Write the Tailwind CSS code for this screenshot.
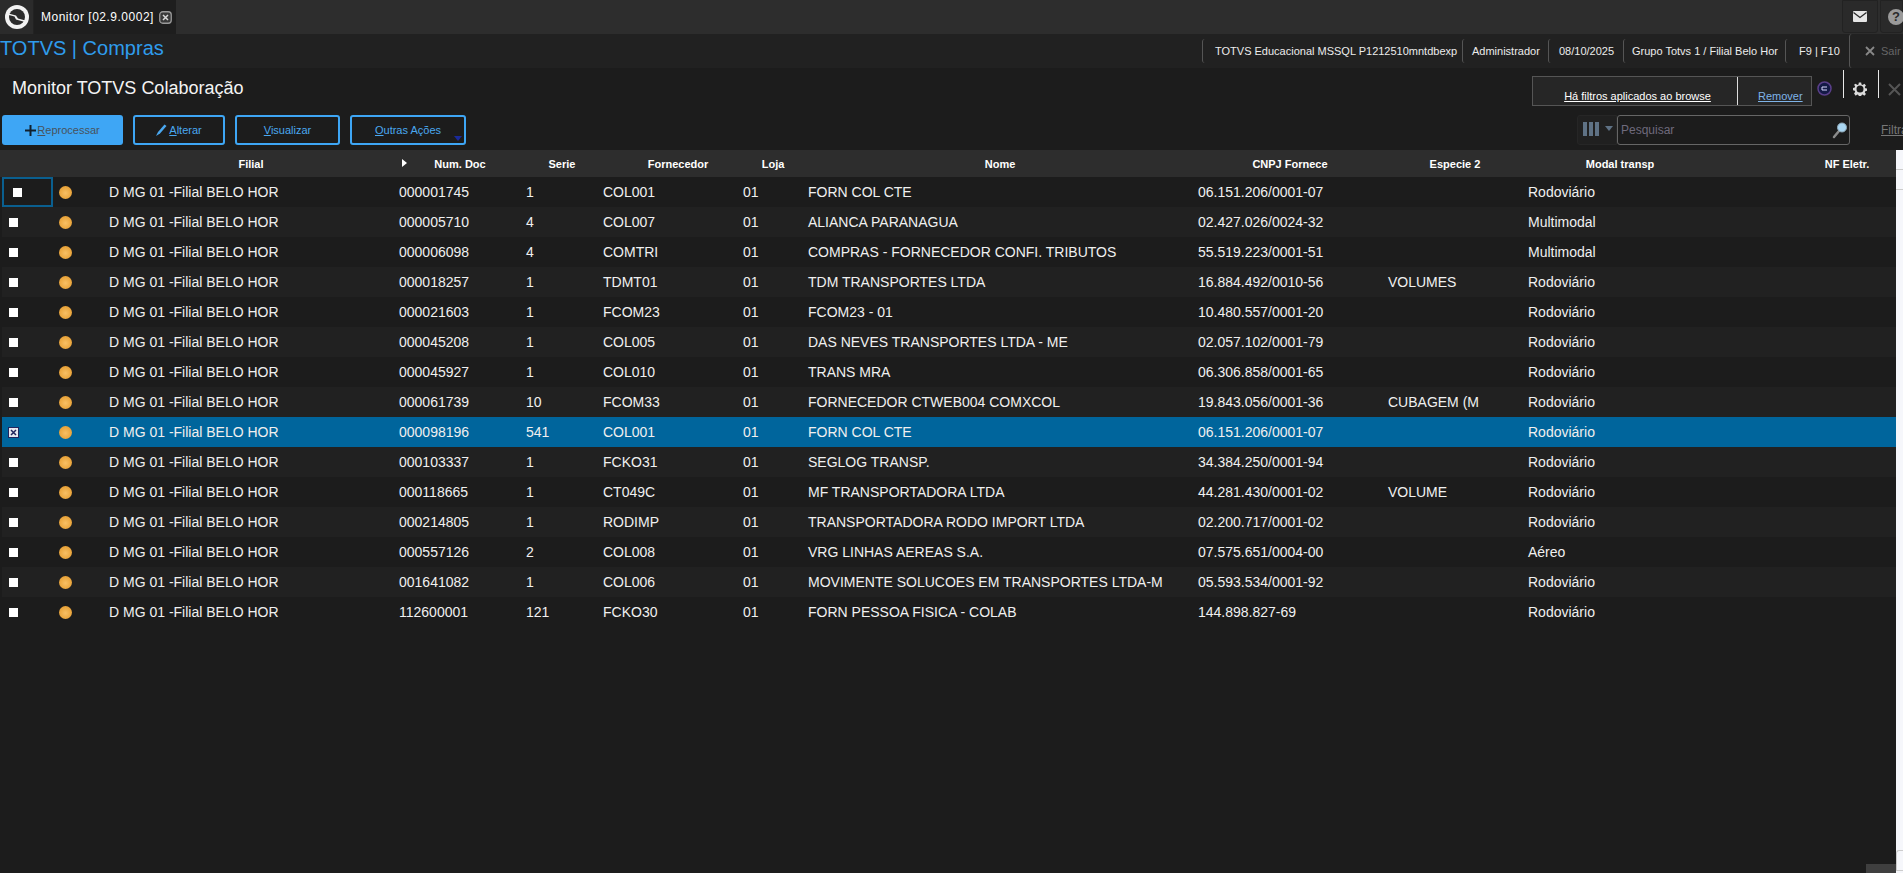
<!DOCTYPE html>
<html lang="pt-BR">
<head>
  <meta charset="UTF-8">
  <title>Monitor TOTVS Colaboração</title>
  <script src="https://cdn.jsdelivr.net/npm/@tailwindcss/browser@4"></script>
</head>
<body class="h-screen w-full overflow-hidden bg-[#1c1c1c] font-['Liberation_Sans',Arial,sans-serif] text-[14px] text-[#f0f0f0] flex flex-col relative">

  <!-- tab bar -->
  <div class="h-[34px] shrink-0 bg-[#2d2d2d] flex">
    <div class="w-[34px] flex items-center justify-center bg-[#2b2b2b] border-r border-[#222]">
      <svg width="26" height="26" viewBox="0 0 26 26">
        <circle cx="13" cy="13" r="12" fill="#f2f2f2"/>
        <circle cx="13" cy="13" r="8" fill="#2b2b2b"/>
        <path d="M4.500 9.500 L12 11.500 L14 14.500 L21.500 16.500 L21 18 L12 15.500 L10.500 12.500 L5 11 Z" fill="#f2f2f2"/>
        <path d="M6 10 L13 12 L15 15 L20 16.500 L20 20 L6 20 Z" fill="#2b2b2b" opacity="0"/>
      </svg>
    </div>
    <div class="w-[142px] bg-[#1e1e1e] flex items-center pl-[7px] gap-[5px]">
      <span class="text-[12px] tracking-[0.5px] text-white whitespace-nowrap">Monitor [02.9.0002]</span>
      <svg width="13" height="13" viewBox="0 0 13 13"><rect x="0.75" y="0.75" width="11.5" height="11.5" rx="3" fill="#3a3a3a" stroke="#9a9a9a" stroke-width="1.3"/><path d="M4 4 L9 9 M9 4 L4 9" stroke="#d8d8d8" stroke-width="1.5"/></svg>
    </div>
    <div class="ml-auto flex gap-[2px]">
      <div class="w-[36px] h-[33px] bg-[#2a2a2a] border border-[#222] rounded-b-[3px] flex items-center justify-center">
        <svg width="14" height="11" viewBox="0 0 14 11"><rect width="14" height="11" rx="1" fill="#e6e6e6"/><path d="M0.5 1.5 L7 6.5 L13.5 1.5" fill="none" stroke="#2a2a2a" stroke-width="1.3"/></svg>
      </div>
      <div class="w-[23px] h-[33px] bg-[#2a2a2a] border border-[#222] rounded-b-[3px] flex items-center pl-[7px]">
        <span class="w-[16px] h-[16px] shrink-0 rounded-full bg-[#9a9a9a] text-[#2a2a2a] text-[13px] font-bold leading-[16px] text-center">?</span>
      </div>
    </div>
  </div>

  <!-- app header -->
  <div class="h-[34px] shrink-0 bg-[#212121] flex items-center">
    <span class="text-[20px] text-[#2f9cec] whitespace-nowrap mb-[6px]">TOTVS | Compras</span>
    <div class="ml-auto flex items-center text-[11px] text-[#ececec] whitespace-nowrap w-[701px] shrink-0">
      <span class="h-[24px] leading-[24px] border-l border-[#555] rounded-l-[3px] w-[260px] pl-[12px]">TOTVS Educacional MSSQL P1212510mntdbexp</span>
      <span class="h-[24px] leading-[24px] border-l border-[#555] rounded-l-[3px] w-[86px] pl-[9px]">Administrador</span>
      <span class="h-[24px] leading-[24px] border-l border-[#555] rounded-l-[3px] w-[75px] pl-[10px]">08/10/2025</span>
      <span class="h-[24px] leading-[24px] border-l border-[#555] rounded-l-[3px] w-[162px] pl-[8px]">Grupo Totvs 1 / Filial Belo Hor</span>
      <span class="h-[24px] leading-[24px] border-l border-[#555] rounded-l-[3px] w-[64px] pl-[13px]">F9 | F10</span>
      <span class="h-[34px] leading-[34px] border-l border-[#555] rounded-l-[3px] pl-[15px] text-[#666] flex items-center gap-[6px]">
        <svg width="10" height="10" viewBox="0 0 10 10"><path d="M1 1 L9 9 M9 1 L1 9" stroke="#888" stroke-width="1.8"/></svg>Sair
      </span>
    </div>
  </div>

  <!-- title row -->
  <div class="h-[47px] shrink-0 flex">
    <h1 class="pl-[12px] pt-[8px] text-[18px] leading-[24px] text-[#f4f4f4] whitespace-nowrap">Monitor TOTVS Colaboração</h1>
    <div class="ml-auto w-[371px] shrink-0 flex items-start">
      <div class="mt-[8px] w-[280px] h-[30px] bg-[#262626] border border-[#555] flex text-[11px] shrink-0">
        <a class="w-[205px] h-full border-r border-[#ddd] text-white underline text-center leading-[14px] pt-[12px] pl-[5px] whitespace-nowrap">Há filtros aplicados ao browse</a>
        <a class="pl-[20px] pt-[12px] leading-[14px] text-[#7fb4e8] underline">Remover</a>
      </div>
      <svg class="mt-[13px] ml-[5px] shrink-0" width="15" height="15" viewBox="0 0 15 15"><circle cx="7.5" cy="7.5" r="6.5" fill="#141a46" stroke="#5a3f8a" stroke-width="1.5"/><path d="M5 6 H10 M5 9 H10 M5 6 V9" stroke="#d8d8ff" stroke-width="1" fill="none"/></svg>
      <div class="mt-[2px] ml-[11px] w-[36px] h-[28px] border-x border-[#e8e8e8] flex items-center justify-center pt-[10px] pr-[2px] shrink-0">
        <svg width="14" height="14" viewBox="0 0 24 24"><path fill="#dcdcdc" fill-rule="evenodd" d="M10 1h4l.6 3.2 2 .8L19.4 3l2.8 2.8-2 2.8.8 2 3 .6v4l-3 .6-.8 2 2 2.8-2.800 2.800-2.800-2-2 .8-.6 3h-4l-.6-3-2-.8-2.800 2L1.800 19.600l2-2.800-.8-2-3-.6v-4l3-.6.8-2-2-2.800L4.600 3l2.800 2 2-.8zM12 6a6 6 0 1 0 0 12 6 6 0 0 0 0-12z"/></svg>
      </div>
      <svg class="mt-[15px] ml-[9px] shrink-0" width="13" height="13" viewBox="0 0 13 13"><path d="M1 1 L12 12 M12 1 L1 12" stroke="#555" stroke-width="2"/></svg>
    </div>
  </div>

  <!-- toolbar -->
  <div class="h-[30px] shrink-0 flex items-stretch text-[11px] mb-[5px] pl-[2px]">
    <button class="w-[121px] bg-[#3ea6f5] rounded-[3px] flex items-center justify-center gap-[1px] text-[#48525c]">
      <svg width="11" height="11" viewBox="0 0 11 11"><path d="M5.500 0 V11 M0 5.500 H11" stroke="#10202e" stroke-width="2"/></svg>
      <span><u>R</u>eprocessar</span>
    </button>
    <button class="ml-[10px] w-[92px] border-2 border-[#3ea6f5] rounded-[3px] flex items-center justify-center gap-[2px] text-[#4aa8f0]">
      <svg width="11" height="12" viewBox="0 0 11 12"><path d="M0 12 L2 8 L8.500 0.500 L10.500 2 L4 9.500 Z" fill="#4aa8f0"/></svg>
      <span><u>A</u>lterar</span>
    </button>
    <button class="ml-[10px] w-[105px] border-2 border-[#3ea6f5] rounded-[3px] text-[#4aa8f0]"><u>V</u>isualizar</button>
    <button class="ml-[10px] w-[116px] border-2 border-[#3ea6f5] rounded-[3px] text-[#4aa8f0] relative"><u>O</u>utras Ações
      <span class="absolute right-[2px] bottom-[2px] border-x-[4px] border-t-[5px] border-x-transparent border-t-[#1a2a9a]"></span>
    </button>
    <div class="ml-auto w-[326px] shrink-0 flex items-stretch">
      <div class="w-[40px] bg-[#202020] border border-[#262626] rounded-l-[3px] flex items-center pl-[5px] gap-[6px] pb-[3px] shrink-0">
        <span class="flex gap-[2px] h-[14px]">
          <span class="w-[4px] bg-[#5f7285]"></span><span class="w-[4px] bg-[#5f7285]"></span><span class="w-[4px] bg-[#5f7285]"></span>
        </span>
        <span class="border-x-[4px] border-t-[5px] border-x-transparent border-t-[#5f7285]"></span>
      </div>
      <div class="w-[233px] border border-[#666] rounded-[3px] flex items-center pl-[3px] pr-[1px] justify-between text-[12px] shrink-0">
        <span class="text-[#6f6a7c]">Pesquisar</span>
        <svg width="16" height="18" viewBox="0 0 16 18"><path d="M2 16 L7 10" stroke="#8a8a8a" stroke-width="2.500" stroke-linecap="round"/><circle cx="10" cy="6.500" r="4.500" fill="#a9d6f2" stroke="#8fa9b8" stroke-width="1"/></svg>
      </div>
      <a class="ml-[31px] self-center text-[12px] text-[#777] underline whitespace-nowrap">Filtrar</a>
    </div>
  </div>

  <!-- browse -->
  <div class="flex-1 min-h-0 flex">
    <div class="w-[1896px] shrink-0 flex flex-col">
      <div class="h-[27px] bg-[#2d2d2d] flex items-center pt-[1px] text-[11px] font-bold text-white text-center shrink-0">
        <div class="w-[100px]"></div>
        <div class="w-[302px] relative">Filial<span class="absolute right-[-5px] top-[3px] border-y-[4px] border-l-[5px] border-y-transparent border-l-white"></span></div>
        <div class="w-[116px]">Num. Doc</div>
        <div class="w-[88px]">Serie</div>
        <div class="w-[144px]">Fornecedor</div>
        <div class="w-[46px]">Loja</div>
        <div class="w-[408px]">Nome</div>
        <div class="w-[172px]">CNPJ Fornece</div>
        <div class="w-[158px]">Especie 2</div>
        <div class="w-[172px]">Modal transp</div>
        <div class="w-[94px] ml-[94px]">NF Eletr.</div>
      </div>

      <div class="ml-[2px] h-[30px] grid grid-cols-[51px_46px_290px_127px_77px_140px_65px_390px_190px_140px_1fr] items-center bg-[#1c1c1c] [&>div]:pl-[10px] [&>div]:whitespace-nowrap">
        <div class="h-full !pl-[9px] border-2 border-[#0a5f8f] flex items-center"><span class="block w-[9px] h-[9px] bg-white"></span></div>
        <div class="!pl-[6px]"><span class="block w-[13px] h-[13px] rounded-full bg-[radial-gradient(circle_at_50%_55%,#f8c064,#e8a238_70%,#b08a50)]"></span></div>
        <div>D MG 01 -Filial BELO HOR</div><div>000001745</div><div>1</div><div>COL001</div><div>01</div><div>FORN COL CTE</div><div>06.151.206/0001-07</div><div></div><div>Rodoviário</div>
      </div>
      <div class="ml-[2px] h-[30px] grid grid-cols-[51px_46px_290px_127px_77px_140px_65px_390px_190px_140px_1fr] items-center bg-[#212121] [&>div]:pl-[10px] [&>div]:whitespace-nowrap">
        <div class="!pl-[7px]"><span class="block w-[9px] h-[9px] bg-white"></span></div>
        <div class="!pl-[6px]"><span class="block w-[13px] h-[13px] rounded-full bg-[radial-gradient(circle_at_50%_55%,#f8c064,#e8a238_70%,#b08a50)]"></span></div>
        <div>D MG 01 -Filial BELO HOR</div><div>000005710</div><div>4</div><div>COL007</div><div>01</div><div>ALIANCA PARANAGUA</div><div>02.427.026/0024-32</div><div></div><div>Multimodal</div>
      </div>
      <div class="ml-[2px] h-[30px] grid grid-cols-[51px_46px_290px_127px_77px_140px_65px_390px_190px_140px_1fr] items-center bg-[#1c1c1c] [&>div]:pl-[10px] [&>div]:whitespace-nowrap">
        <div class="!pl-[7px]"><span class="block w-[9px] h-[9px] bg-white"></span></div>
        <div class="!pl-[6px]"><span class="block w-[13px] h-[13px] rounded-full bg-[radial-gradient(circle_at_50%_55%,#f8c064,#e8a238_70%,#b08a50)]"></span></div>
        <div>D MG 01 -Filial BELO HOR</div><div>000006098</div><div>4</div><div>COMTRI</div><div>01</div><div>COMPRAS - FORNECEDOR CONFI. TRIBUTOS</div><div>55.519.223/0001-51</div><div></div><div>Multimodal</div>
      </div>
      <div class="ml-[2px] h-[30px] grid grid-cols-[51px_46px_290px_127px_77px_140px_65px_390px_190px_140px_1fr] items-center bg-[#212121] [&>div]:pl-[10px] [&>div]:whitespace-nowrap">
        <div class="!pl-[7px]"><span class="block w-[9px] h-[9px] bg-white"></span></div>
        <div class="!pl-[6px]"><span class="block w-[13px] h-[13px] rounded-full bg-[radial-gradient(circle_at_50%_55%,#f8c064,#e8a238_70%,#b08a50)]"></span></div>
        <div>D MG 01 -Filial BELO HOR</div><div>000018257</div><div>1</div><div>TDMT01</div><div>01</div><div>TDM TRANSPORTES LTDA</div><div>16.884.492/0010-56</div><div>VOLUMES</div><div>Rodoviário</div>
      </div>
      <div class="ml-[2px] h-[30px] grid grid-cols-[51px_46px_290px_127px_77px_140px_65px_390px_190px_140px_1fr] items-center bg-[#1c1c1c] [&>div]:pl-[10px] [&>div]:whitespace-nowrap">
        <div class="!pl-[7px]"><span class="block w-[9px] h-[9px] bg-white"></span></div>
        <div class="!pl-[6px]"><span class="block w-[13px] h-[13px] rounded-full bg-[radial-gradient(circle_at_50%_55%,#f8c064,#e8a238_70%,#b08a50)]"></span></div>
        <div>D MG 01 -Filial BELO HOR</div><div>000021603</div><div>1</div><div>FCOM23</div><div>01</div><div>FCOM23 - 01</div><div>10.480.557/0001-20</div><div></div><div>Rodoviário</div>
      </div>
      <div class="ml-[2px] h-[30px] grid grid-cols-[51px_46px_290px_127px_77px_140px_65px_390px_190px_140px_1fr] items-center bg-[#212121] [&>div]:pl-[10px] [&>div]:whitespace-nowrap">
        <div class="!pl-[7px]"><span class="block w-[9px] h-[9px] bg-white"></span></div>
        <div class="!pl-[6px]"><span class="block w-[13px] h-[13px] rounded-full bg-[radial-gradient(circle_at_50%_55%,#f8c064,#e8a238_70%,#b08a50)]"></span></div>
        <div>D MG 01 -Filial BELO HOR</div><div>000045208</div><div>1</div><div>COL005</div><div>01</div><div>DAS NEVES TRANSPORTES LTDA - ME</div><div>02.057.102/0001-79</div><div></div><div>Rodoviário</div>
      </div>
      <div class="ml-[2px] h-[30px] grid grid-cols-[51px_46px_290px_127px_77px_140px_65px_390px_190px_140px_1fr] items-center bg-[#1c1c1c] [&>div]:pl-[10px] [&>div]:whitespace-nowrap">
        <div class="!pl-[7px]"><span class="block w-[9px] h-[9px] bg-white"></span></div>
        <div class="!pl-[6px]"><span class="block w-[13px] h-[13px] rounded-full bg-[radial-gradient(circle_at_50%_55%,#f8c064,#e8a238_70%,#b08a50)]"></span></div>
        <div>D MG 01 -Filial BELO HOR</div><div>000045927</div><div>1</div><div>COL010</div><div>01</div><div>TRANS MRA</div><div>06.306.858/0001-65</div><div></div><div>Rodoviário</div>
      </div>
      <div class="ml-[2px] h-[30px] grid grid-cols-[51px_46px_290px_127px_77px_140px_65px_390px_190px_140px_1fr] items-center bg-[#212121] [&>div]:pl-[10px] [&>div]:whitespace-nowrap">
        <div class="!pl-[7px]"><span class="block w-[9px] h-[9px] bg-white"></span></div>
        <div class="!pl-[6px]"><span class="block w-[13px] h-[13px] rounded-full bg-[radial-gradient(circle_at_50%_55%,#f8c064,#e8a238_70%,#b08a50)]"></span></div>
        <div>D MG 01 -Filial BELO HOR</div><div>000061739</div><div>10</div><div>FCOM33</div><div>01</div><div>FORNECEDOR CTWEB004 COMXCOL</div><div>19.843.056/0001-36</div><div>CUBAGEM (M</div><div>Rodoviário</div>
      </div>
      <div class="ml-[2px] h-[30px] grid grid-cols-[51px_46px_290px_127px_77px_140px_65px_390px_190px_140px_1fr] items-center bg-[#00659c] [&>div]:pl-[10px] [&>div]:whitespace-nowrap">
        <div class="!pl-[6px]">
          <svg class="block" width="11" height="11" viewBox="0 0 11 11"><rect x="0.5" y="0.5" width="10" height="10" fill="#e8e8f0" stroke="#23265e"/><path d="M3 3 L8 8 M8 3 L3 8" stroke="#23265e" stroke-width="1.500"/></svg>
        </div>
        <div class="!pl-[6px]"><span class="block w-[13px] h-[13px] rounded-full bg-[radial-gradient(circle_at_50%_55%,#f8c064,#e8a238_70%,#b08a50)]"></span></div>
        <div>D MG 01 -Filial BELO HOR</div><div>000098196</div><div>541</div><div>COL001</div><div>01</div><div>FORN COL CTE</div><div>06.151.206/0001-07</div><div></div><div>Rodoviário</div>
      </div>
      <div class="ml-[2px] h-[30px] grid grid-cols-[51px_46px_290px_127px_77px_140px_65px_390px_190px_140px_1fr] items-center bg-[#212121] [&>div]:pl-[10px] [&>div]:whitespace-nowrap">
        <div class="!pl-[7px]"><span class="block w-[9px] h-[9px] bg-white"></span></div>
        <div class="!pl-[6px]"><span class="block w-[13px] h-[13px] rounded-full bg-[radial-gradient(circle_at_50%_55%,#f8c064,#e8a238_70%,#b08a50)]"></span></div>
        <div>D MG 01 -Filial BELO HOR</div><div>000103337</div><div>1</div><div>FCKO31</div><div>01</div><div>SEGLOG TRANSP.</div><div>34.384.250/0001-94</div><div></div><div>Rodoviário</div>
      </div>
      <div class="ml-[2px] h-[30px] grid grid-cols-[51px_46px_290px_127px_77px_140px_65px_390px_190px_140px_1fr] items-center bg-[#1c1c1c] [&>div]:pl-[10px] [&>div]:whitespace-nowrap">
        <div class="!pl-[7px]"><span class="block w-[9px] h-[9px] bg-white"></span></div>
        <div class="!pl-[6px]"><span class="block w-[13px] h-[13px] rounded-full bg-[radial-gradient(circle_at_50%_55%,#f8c064,#e8a238_70%,#b08a50)]"></span></div>
        <div>D MG 01 -Filial BELO HOR</div><div>000118665</div><div>1</div><div>CT049C</div><div>01</div><div>MF TRANSPORTADORA LTDA</div><div>44.281.430/0001-02</div><div>VOLUME</div><div>Rodoviário</div>
      </div>
      <div class="ml-[2px] h-[30px] grid grid-cols-[51px_46px_290px_127px_77px_140px_65px_390px_190px_140px_1fr] items-center bg-[#212121] [&>div]:pl-[10px] [&>div]:whitespace-nowrap">
        <div class="!pl-[7px]"><span class="block w-[9px] h-[9px] bg-white"></span></div>
        <div class="!pl-[6px]"><span class="block w-[13px] h-[13px] rounded-full bg-[radial-gradient(circle_at_50%_55%,#f8c064,#e8a238_70%,#b08a50)]"></span></div>
        <div>D MG 01 -Filial BELO HOR</div><div>000214805</div><div>1</div><div>RODIMP</div><div>01</div><div>TRANSPORTADORA RODO IMPORT LTDA</div><div>02.200.717/0001-02</div><div></div><div>Rodoviário</div>
      </div>
      <div class="ml-[2px] h-[30px] grid grid-cols-[51px_46px_290px_127px_77px_140px_65px_390px_190px_140px_1fr] items-center bg-[#1c1c1c] [&>div]:pl-[10px] [&>div]:whitespace-nowrap">
        <div class="!pl-[7px]"><span class="block w-[9px] h-[9px] bg-white"></span></div>
        <div class="!pl-[6px]"><span class="block w-[13px] h-[13px] rounded-full bg-[radial-gradient(circle_at_50%_55%,#f8c064,#e8a238_70%,#b08a50)]"></span></div>
        <div>D MG 01 -Filial BELO HOR</div><div>000557126</div><div>2</div><div>COL008</div><div>01</div><div>VRG LINHAS AEREAS S.A.</div><div>07.575.651/0004-00</div><div></div><div>Aéreo</div>
      </div>
      <div class="ml-[2px] h-[30px] grid grid-cols-[51px_46px_290px_127px_77px_140px_65px_390px_190px_140px_1fr] items-center bg-[#212121] [&>div]:pl-[10px] [&>div]:whitespace-nowrap">
        <div class="!pl-[7px]"><span class="block w-[9px] h-[9px] bg-white"></span></div>
        <div class="!pl-[6px]"><span class="block w-[13px] h-[13px] rounded-full bg-[radial-gradient(circle_at_50%_55%,#f8c064,#e8a238_70%,#b08a50)]"></span></div>
        <div>D MG 01 -Filial BELO HOR</div><div>001641082</div><div>1</div><div>COL006</div><div>01</div><div>MOVIMENTE SOLUCOES EM TRANSPORTES LTDA-M</div><div>05.593.534/0001-92</div><div></div><div>Rodoviário</div>
      </div>
      <div class="ml-[2px] h-[30px] grid grid-cols-[51px_46px_290px_127px_77px_140px_65px_390px_190px_140px_1fr] items-center bg-[#1c1c1c] [&>div]:pl-[10px] [&>div]:whitespace-nowrap">
        <div class="!pl-[7px]"><span class="block w-[9px] h-[9px] bg-white"></span></div>
        <div class="!pl-[6px]"><span class="block w-[13px] h-[13px] rounded-full bg-[radial-gradient(circle_at_50%_55%,#f8c064,#e8a238_70%,#b08a50)]"></span></div>
        <div>D MG 01 -Filial BELO HOR</div><div>112600001</div><div>121</div><div>FCKO30</div><div>01</div><div>FORN PESSOA FISICA - COLAB</div><div>144.898.827-69</div><div></div><div>Rodoviário</div>
      </div>
    </div>

    <!-- scrollbar strip -->
    <div class="w-[7px] shrink-0 bg-[#f6f7fb] flex flex-col">
      <div class="h-[20px] border-b border-[#ccc]"></div>
      <div class="h-[20px] border-b border-[#ccc]"></div>
      <div class="flex-1"></div>
      <div class="h-[21px] border-y border-l border-[#ccc] rounded-tl-[3px] mb-[2px]"></div>
    </div>
  </div>
  <div class="absolute left-[1866px] bottom-0 w-[30px] h-[9px] bg-[#3f3f3f]"></div>
</body>
</html>
